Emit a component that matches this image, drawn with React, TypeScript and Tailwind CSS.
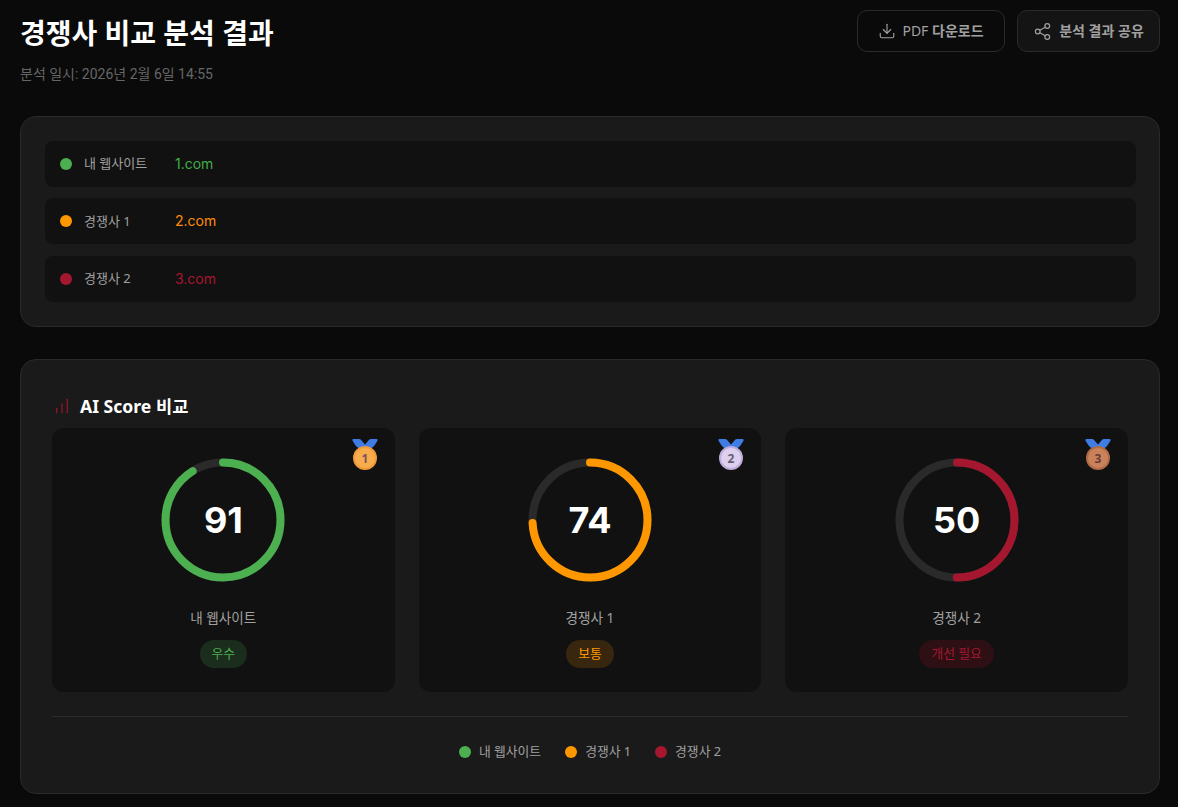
import { ChartNoAxesColumnIncreasing, Download, Share2 } from 'lucide-react'

const GREEN = '#4caf50'
const ORANGE = '#ff9800'
const RED = '#a5172f'

const sites = [
  { label: '내 웹사이트', url: '1.com', dot: 'bg-[#4caf50]', text: 'text-[#3fae46]' },
  { label: '경쟁사 1', url: '2.com', dot: 'bg-[#ff9800]', text: 'text-[#ff8c0a]' },
  { label: '경쟁사 2', url: '3.com', dot: 'bg-[#a5172f]', text: 'text-[#a5172f]' },
]

const scores = [
  { label: '내 웹사이트', score: 91, color: GREEN, rank: 1, badge: '우수', badgeClass: 'bg-[#1b2d1c] text-[#4caf50]' },
  { label: '경쟁사 1', score: 74, color: ORANGE, rank: 2, badge: '보통', badgeClass: 'bg-[#38270e] text-[#ff9800]' },
  { label: '경쟁사 2', score: 50, color: RED, rank: 3, badge: '개선 필요', badgeClass: 'bg-[#2e0f14] text-[#a5172f]' },
]

const medalColors: Record<number, { rim: string; fill: string; ink: string }> = {
  1: { rim: '#f19a37', fill: '#f7ac4d', ink: '#85505c' },
  2: { rim: '#bfaedb', fill: '#ddd0ee', ink: '#645e6e' },
  3: { rim: '#b06c48', fill: '#c98259', ink: '#6b3a3f' },
}

const Medal = ({ rank }: { rank: number }) => {
  const c = medalColors[rank]
  return (
    <svg width="28" height="34" viewBox="0 0 28 34" className="absolute top-[9px] right-[16px]" aria-hidden>
      <path d="M2.500 2h5.500q1.200 0 1.900.800L14 7.500l4.100-4.700Q18.800 2 20 2h5.500q1.800 0 1 1.700Q24 9 18.500 13h-9Q4 9 1.500 3.700.700 2 2.500 2z" fill="#3f7de4" />
      <circle cx="14" cy="21" r="12" fill={c.rim} />
      <circle cx="14" cy="21" r="10" fill={c.fill} />
      <text x="14" y="25.500" textAnchor="middle" fontSize="12" fontWeight="700" fill={c.ink} fontFamily="Noto Sans, sans-serif">
        {rank}
      </text>
    </svg>
  )
}

const ScoreRing = ({ score, color }: { score: number; color: string }) => {
  const r = 57.5
  const len = 2 * Math.PI * r
  return (
    <div className="relative h-[124px] w-[124px]">
      <svg width="124" height="124" viewBox="0 0 124 124" className="-rotate-90">
        <circle cx="62" cy="62" r={r} fill="none" stroke="#2a2a2a" strokeWidth="8" />
        <circle
          cx="62"
          cy="62"
          r={r}
          fill="none"
          stroke={color}
          strokeWidth="8"
          strokeLinecap="round"
          strokeDasharray={`${(len * score) / 100} ${len}`}
        />
      </svg>
      <span className="absolute inset-0 flex items-center justify-center font-['Inter',sans-serif] text-[36px] font-bold text-white">
        {score}
      </span>
    </div>
  )
}

export default function App() {
  return (
    <div className="min-h-[807px] bg-[#0a0a0a] pt-2.5 pr-[18px] pl-5 font-['Noto_Sans','Noto_Sans_CJK_KR',sans-serif]">
      <header className="flex items-start justify-between">
        <div>
          <h1 className="mt-[3px] text-[28px] leading-[40px] font-bold text-white">경쟁사 비교 분석 결과</h1>
          <p className="mt-[11px] font-['Roboto','Noto_Sans_CJK_KR',sans-serif] text-sm leading-5 text-[#666666]">
            분석 일시: 2026년 2월 6일 14:55
          </p>
        </div>
        <div className="flex gap-3">
          <button className="flex h-[42px] w-[148px] items-center justify-center gap-1.5 rounded-[10px] border border-[#2a2a2a] text-sm font-semibold text-[#a0a0a0]">
            <Download size={18} strokeWidth={1.500} />
            <span>
              <span className="font-normal">PDF</span> 다운로드
            </span>
          </button>
          <button className="flex h-[42px] w-[143px] items-center justify-center gap-[7px] rounded-[10px] border border-[#2a2a2a] bg-[#141414] text-sm font-semibold text-[#a0a0a0]">
            <Share2 size={19} strokeWidth={1.500} />
            분석 결과 공유
          </button>
        </div>
      </header>

      <section className="mt-[32px] flex flex-col gap-[11.500px] rounded-2xl border border-[#2a2a2a] bg-[#1a1a1a] pt-[23.900px] pr-[23px] pb-[24.100px] pl-6">
        {sites.map((s) => (
          <div key={s.url} className="flex h-[46px] items-center rounded-lg bg-[#111111] px-[15px]">
            <span className={`h-3 w-3 rounded-full ${s.dot}`} />
            <span className="ml-3 w-[91px] text-[13px] text-[#a0a0a0]">{s.label}</span>
            <span className={`font-['Inter',sans-serif] text-sm ${s.text}`}>{s.url}</span>
          </div>
        ))}
      </section>

      <section className="mt-8 rounded-2xl border border-[#2a2a2a] bg-[#1a1a1a] px-[31px] pt-[32px] pb-[31px]">
        <h2 className="flex h-[28px] items-center gap-[9px] text-[17.600px] font-bold text-white">
          <ChartNoAxesColumnIncreasing size={18} color={RED} strokeWidth={1.500} className="ml-px" />
          AI Score 비교
        </h2>
        <div className="mt-2 grid grid-cols-3 gap-6">
          {scores.map((s) => (
            <div key={s.label} className="relative flex h-[264px] flex-col items-center rounded-xl bg-[#111111] pt-[30px]">
              <Medal rank={s.rank} />
              <ScoreRing score={s.score} color={s.color} />
              <p className="mt-[26px] text-[13.600px] leading-5 text-[#a0a0a0]">{s.label}</p>
              <span className={`mt-3 flex h-7 items-center rounded-full px-3 text-[12.800px] ${s.badgeClass}`}>{s.badge}</span>
            </div>
          ))}
        </div>
        <div className="mt-6 flex justify-center gap-6 border-t border-[#2a2a2a] pt-[25px]">
          {sites.map((s) => (
            <div key={s.url} className="flex h-5 items-center gap-2">
              <span className={`h-3 w-3 rounded-full ${s.dot}`} />
              <span className="text-[12.800px] text-[#a0a0a0]">{s.label}</span>
            </div>
          ))}
        </div>
      </section>
    </div>
  )
}
